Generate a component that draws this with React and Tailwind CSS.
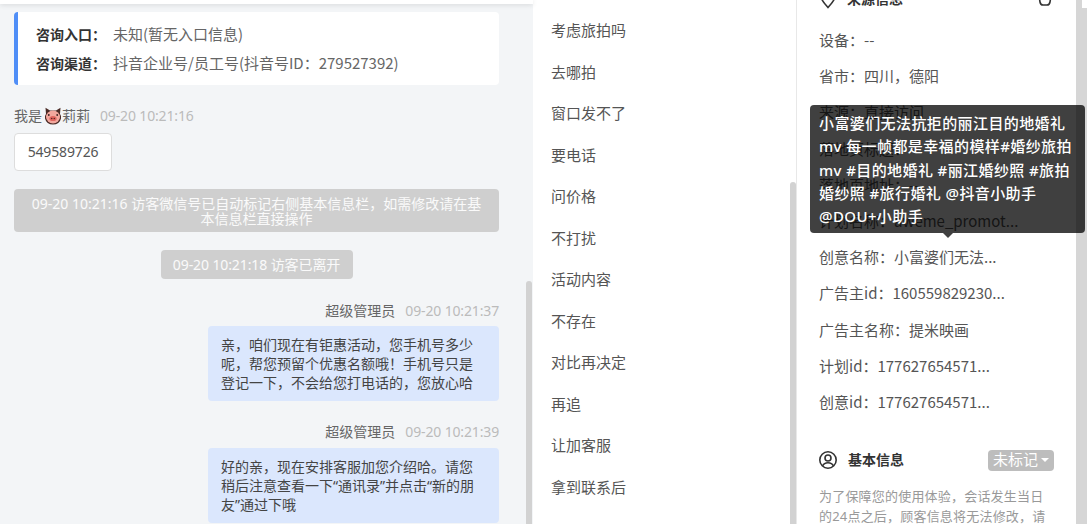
const font = { fontFamily: '"Noto Sans","Noto Sans CJK SC",sans-serif' };
const cjk = { fontFamily: '"Noto Sans CJK SC","Noto Sans",sans-serif' };

function Pig() {
  return (
    <svg viewBox="0 0 18 18" className="inline-block w-[18px] h-[18px] ml-[2px] align-[-4px]">
      <path d="M1.5 0.8 L6 3.4 L12 3.4 L16.5 0.8 L16 7 Q17.6 9 17 11.5 Q15.5 17.6 9 17.6 Q2.5 17.6 1 11.5 Q0.4 9 2 7 Z" fill="#4a2b26" />
      <ellipse cx="9" cy="10" rx="7" ry="6.4" fill="#f2a79d" />
      <ellipse cx="9" cy="11.5" rx="3.6" ry="2.6" fill="#e0665f" />
      <circle cx="7.7" cy="11.5" r="0.8" fill="#5b2320" />
      <circle cx="10.3" cy="11.5" r="0.8" fill="#5b2320" />
      <circle cx="4.8" cy="8" r="0.9" fill="#3a2320" />
      <circle cx="13.2" cy="8" r="0.9" fill="#3a2320" />
    </svg>
  );
}

function Meta({ name, time, right }) {
  return (
    <div className={`flex items-center gap-[10px] h-5 text-sm ${right ? "justify-end" : ""}`}>
      <span className="text-[#666]">{name}</span>
      <span className="text-[#bbb] tracking-[-0.15px]">{time}</span>
    </div>
  );
}

const phrases = ["考虑旅拍吗", "去哪拍", "窗口发不了", "要电话", "问价格", "不打扰", "活动内容", "不存在", "对比再决定", "再追", "让加客服", "拿到联系后"];
const rows = ["设备：--", "省市：四川，德阳", "来源：直接访问", "落地页标题：--", "落地页地址：--", "计划名称：aweme_promot...", "创意名称：小富婆们无法...", "广告主id：160559829230...", "广告主名称：提米映画", "计划id：177627654571...", "创意id：177627654571..."];

export default function App() {
  return (
    <div style={font} className="relative flex w-[1087px] h-[524px] overflow-hidden bg-white text-sm text-[#555]">
      {/* chat column */}
      <div className="relative w-[533px] shrink-0 bg-[#f3f5f7]">
        <div className="h-1 bg-white shadow-[0_1px_5px_rgba(0,0,0,0.12)]" />
        <div className="pl-[14px] pr-[34px] pt-2">
          <div style={cjk} className="h-[73px] bg-white border-l-4 border-[#4f8ef7] rounded-sm pl-[18px] flex flex-col justify-center gap-[9px] text-[15px] text-[#666]">
            <div className="leading-5"><b className="font-bold text-[14px] text-[#333] mr-[7px]">咨询入口：</b>未知(暂无入口信息)</div>
            <div className="leading-5"><b className="font-bold text-[14px] text-[#333] mr-[7px]">咨询渠道：</b>抖音企业号/员工号(抖音号ID：279527392)</div>
          </div>
          <div className="mt-[21px]">
            <div className="flex items-center gap-[10px] h-5">
              <span className="text-[#666]">我是<Pig />莉莉</span>
              <span className="text-[#bbb] tracking-[-0.15px]">09-20 10:21:16</span>
            </div>
            <div className="mt-[7px] w-[98px] h-[38px] flex items-center justify-center bg-white border border-[#ddd] rounded text-[#555] tracking-[-0.15px]">549589726</div>
          </div>
          <div className="mt-[18px] h-[43px] bg-[#cfcfcf] rounded-sm text-white/90 text-center leading-[15px] px-4 flex items-center justify-center">
            <span>09-20 10:21:16 访客微信号已自动标记右侧基本信息栏，如需修改请在基本信息栏直接操作</span>
          </div>
          <div className="mt-[18px] flex justify-center">
            <div className="w-[192px] h-[29px] bg-[#cfcfcf] rounded-sm text-white/90 flex items-center justify-center whitespace-nowrap tracking-[-0.1px]">09-20 10:21:18 访客已离开</div>
          </div>
          <div className="mt-[22px]">
            <Meta right name="超级管理员" time="09-20 10:21:37" />
            <div className="mt-[5px] ml-auto w-[291px] h-[75px] bg-[#dbe7fd] rounded px-[13px] py-[9px] text-[#444] leading-[19px]">亲，咱们现在有钜惠活动，您手机号多少呢，帮您预留个优惠名额哦！手机号只是登记一下，不会给您打电话的，您放心哈</div>
          </div>
          <div className="mt-[21px]">
            <Meta right name="超级管理员" time="09-20 10:21:39" />
            <div className="mt-[6px] ml-auto w-[291px] h-[75px] bg-[#dbe7fd] rounded px-[13px] py-[9px] text-[#444] leading-[19px]">好的亲，现在安排客服加您介绍哈。请您稍后注意查看一下“通讯录”并点击“新的朋友”通过下哦</div>
          </div>
        </div>
        <div className="absolute left-[526px] top-[281px] bottom-0 w-[6px] bg-[#d2d2d2] rounded-t-[3px]" />
      </div>

      {/* phrases column */}
      <div className="relative w-[264px] shrink-0 border-r border-[#e8e8e8] pl-[18px] pt-[10px] text-[15px]">
        {phrases.map((p) => (
          <div key={p} className="h-[41.55px] leading-[41.55px] text-[#555]">{p}</div>
        ))}
        <div className="absolute left-[257px] top-[182px] bottom-0 w-[6px] bg-[#d2d2d2] rounded-t-[3px]" />
      </div>

      {/* info column */}
      <div className="relative flex-1 pl-[22px]">
        <div className="flex items-center justify-between w-[234px] h-5 -mt-[11px]">
          <div className="flex items-center gap-[10px]">
            <svg viewBox="0 0 18 20" className="w-[18px] h-5 text-[#333]" fill="none" stroke="currentColor" strokeWidth="1.6"><path d="M9 18.5 C5 14 2 11 2 7.5 A7 7 0 0 1 16 7.5 C16 11 13 14 9 18.5 Z" /><circle cx="9" cy="7.5" r="2" /></svg>
            <span className="font-bold text-[#333]">来源信息</span>
          </div>
          <svg viewBox="0 0 16 16" className="w-4 h-4 text-[#333]" fill="none" stroke="currentColor" strokeWidth="1.6"><path d="M1.5 2 L3 11 Q3.5 14 6 14 L10 14 Q12.5 14 13 11 L14.5 2" /></svg>
        </div>
        <div style={cjk} className="mt-[13px] text-[15px]">
          {rows.map((r) => (
            <div key={r} className="h-[36.2px] leading-[36.2px] text-[#555] whitespace-nowrap">{r}</div>
          ))}
        </div>
        <div className="flex items-center justify-between w-[235px] mt-[29px] h-[22px]">
          <div className="flex items-center gap-[10px]">
            <svg viewBox="0 0 20 20" className="w-5 h-5 -ml-[1px] text-[#333]" fill="none" stroke="currentColor" strokeWidth="1.6"><circle cx="10" cy="10" r="8.2" /><circle cx="10" cy="8" r="3" /><path d="M4.6 16 Q6 12.8 10 12.8 Q14 12.8 15.4 16" /></svg>
            <span className="font-bold text-[#333]">基本信息</span>
          </div>
          <div className="w-[66px] h-[21px] bg-[#bdbdbd] rounded-sm text-white text-[15px] flex items-center justify-center gap-[3px]">
            未标记<span className="w-0 h-0 border-x-[4px] border-x-transparent border-t-[4px] border-t-white" />
          </div>
        </div>
        <p className="mt-[15px] w-[228px] text-[13px] tracking-[0.2px] leading-5 text-[#999]">为了保障您的使用体验，会话发生当日的24点之后，顾客信息将无法修改，请</p>
        <div className="absolute left-[279px] top-[8px] bottom-0 w-[11px] bg-[#d6d6d6]" />
        <div className="absolute left-[279px] top-0 h-2 w-[6px] bg-[#d6d6d6]" />
      </div>

      {/* tooltip */}
      <div className="absolute left-[810px] top-[105px] w-[275px] h-[128px] bg-black/75 rounded-sm pl-[9px] pr-[11px] pt-[7px] text-white text-[15px] tracking-[0.4px] font-medium leading-[23.3px]">
        小富婆们无法抗拒的丽江目的地婚礼 mv 每一帧都是幸福的模样#婚纱旅拍 mv #目的地婚礼 #丽江婚纱照 #旅拍 婚纱照 #旅行婚礼 @抖音小助手 @DOU+小助手
        <span className="absolute left-[133px] top-full w-0 h-0 border-x-[5px] border-x-transparent border-t-[5px] border-t-black/75" />
      </div>
    </div>
  );
}
